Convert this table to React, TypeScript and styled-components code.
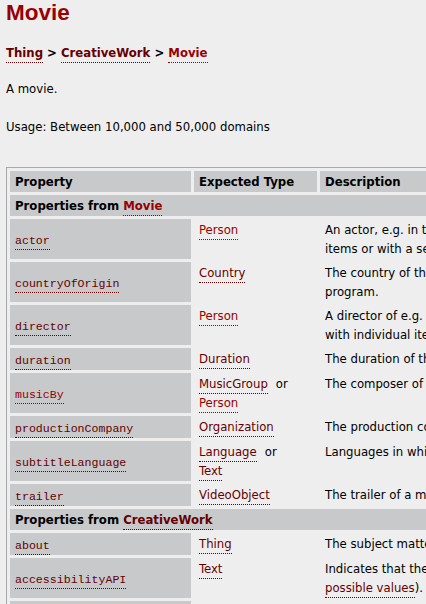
import React from "react";
import styled, { createGlobalStyle } from "styled-components";

const Global = createGlobalStyle`
  html, body { margin: 0; padding: 0; overflow: hidden; background: #eeeeee; }
  body {
    font-family: "DejaVu Sans Condensed", "DejaVu Sans", sans-serif;
    font-size: 13px;
    color: #000;
  }
`;

const Page = styled.div`
  padding: 0 6px;
  width: 1200px;
`;

const Title = styled.h1`
  margin: 0;
  font-family: "Liberation Sans", Arial, sans-serif;
  font-weight: bold;
  font-size: 22.5px;
  line-height: 26px;
  color: #990000;
`;

const Crumbs = styled.div`
  margin-top: 17px;
  font-weight: bold;
  line-height: 19px;
`;

const Para = styled.p<{ $top: number }>`
  margin: ${(p) => p.$top}px 0 0;
  line-height: 19px;
`;

const Link = styled.a<{ $fresh?: boolean }>`
  color: ${(p) => (p.$fresh ? "#990000" : "#660000")};
  text-decoration: none;
  border-bottom: 1px dotted ${(p) => (p.$fresh ? "#990000" : "#660000")};
  padding-bottom: 2px;
`;

const Code = styled.code`
  font-family: "Liberation Mono", "Courier New", monospace;
  font-size: 11.6px;
  line-height: 13px;
`;

const Table = styled.table`
  margin-top: 31px;
  border: 1px solid #a8a8a8;
  border-spacing: 3px;
  table-layout: fixed;
  width: 1100px;
`;

const HeadCell = styled.th`
  background: #c7c9cb;
  text-align: left;
  font-weight: bold;
  padding: 1px 5px;
  height: 19px;
  line-height: 19px;
  vertical-align: middle;
`;

const GroupCell = styled(HeadCell)``;

const PropCell = styled.th`
  background: #c7c9cb;
  text-align: left;
  font-weight: normal;
  padding: 1px 5px;
  height: 20px;
  line-height: 19px;
  vertical-align: middle;
`;

const Cell = styled.td`
  padding: 1px 5px;
  height: 20px;
  line-height: 19px;
  vertical-align: top;
  white-space: nowrap;
`;

const Or = styled.span`
  margin: 0 6px 0 8px;
`;

type T = { name: string; fresh?: boolean };
type Row = {
  prop: string;
  propFresh?: boolean;
  types: T[];
  desc: React.ReactNode[];
};

const movieRows: Row[] = [
  {
    prop: "actor",
    types: [{ name: "Person", fresh: true }],
    desc: [
      "An actor, e.g. in tv, radio, movie, video gaming etc., or in an event. Actors can be associated with individual",
      "items or with a series, episode, clip.",
    ],
  },
  {
    prop: "countryOfOrigin",
    types: [{ name: "Country" }],
    desc: [
      "The country of the principal offices of the production company or individual responsible for the movie or",
      "program.",
    ],
  },
  {
    prop: "director",
    types: [{ name: "Person", fresh: true }],
    desc: [
      "A director of e.g. tv, radio, movie, video gaming etc. content, or of an event. Directors can be associated",
      "with individual items or with a series, episode, clip.",
    ],
  },
  {
    prop: "duration",
    types: [{ name: "Duration" }],
    desc: ["The duration of the item (movie, audio recording, event, etc.) in ISO 8601 date format."],
  },
  {
    prop: "musicBy",
    propFresh: true,
    types: [{ name: "MusicGroup" }, { name: "Person", fresh: true }],
    desc: ["The composer of the soundtrack."],
  },
  {
    prop: "productionCompany",
    types: [{ name: "Organization" }],
    desc: ["The production company or studio responsible for the item e.g. series, video game, episode etc."],
  },
  {
    prop: "subtitleLanguage",
    types: [{ name: "Language" }, { name: "Text" }],
    desc: ["Languages in which subtitles/captions are available, in IETF BCP 47 standard format."],
  },
  {
    prop: "trailer",
    types: [{ name: "VideoObject" }],
    desc: ["The trailer of a movie or tv/radio series, season, episode, etc."],
  },
];

const workRows: Row[] = [
  {
    prop: "about",
    types: [{ name: "Thing" }],
    desc: ["The subject matter of the content."],
  },
  {
    prop: "accessibilityAPI",
    types: [{ name: "Text" }],
    desc: [
      "Indicates that the resource is compatible with the referenced accessibility API (WebSchemas wiki lists",
      <>
        <Link href="#">possible values</Link>).
      </>,
    ],
  },
  {
    prop: "accessibilityControl",
    types: [{ name: "Text" }],
    desc: [
      "Identifies input methods that are sufficient to fully control the described resource (WebSchemas wiki lists",
      <>
        <Link href="#">possible values</Link>).
      </>,
    ],
  },
];

function DataRow({ row }: { row: Row }) {
  return (
    <tr>
      <PropCell>
        <Code>
          <Link href="#" $fresh={row.propFresh}>
            {row.prop}
          </Link>
        </Code>
      </PropCell>
      <Cell>
        {row.types.map((t, i) => (
          <React.Fragment key={t.name + i}>
            {i > 0 && (
              <>
                <Or>or</Or>
                <br />
              </>
            )}
            <Link href="#" $fresh={t.fresh}>
              {t.name}
            </Link>
          </React.Fragment>
        ))}
      </Cell>
      <Cell>
        {row.desc.map((d, i) => (
          <React.Fragment key={i}>
            {i > 0 && <br />}
            {d}
          </React.Fragment>
        ))}
      </Cell>
    </tr>
  );
}

export default function App() {
  return (
    <>
      <Global />
      <Page>
        <Title>Movie</Title>
        <Crumbs>
          <Link href="#">Thing</Link> &gt; <Link href="#">CreativeWork</Link> &gt;{" "}
          <Link href="#" $fresh>
            Movie
          </Link>
        </Crumbs>
        <Para $top={17}>A movie.</Para>
        <Para $top={19}>Usage: Between 10,000 and 50,000 domains</Para>
        <Table>
          <colgroup>
            <col style={{ width: 181 }} />
            <col style={{ width: 123 }} />
            <col />
          </colgroup>
          <thead>
            <tr>
              <HeadCell>Property</HeadCell>
              <HeadCell>Expected Type</HeadCell>
              <HeadCell>Description</HeadCell>
            </tr>
          </thead>
          <tbody>
            <tr>
              <GroupCell colSpan={3}>
                Properties from{" "}
                <Link href="#" $fresh>
                  Movie
                </Link>
              </GroupCell>
            </tr>
            {movieRows.map((r) => (
              <DataRow key={r.prop} row={r} />
            ))}
            <tr>
              <GroupCell colSpan={3}>
                Properties from <Link href="#">CreativeWork</Link>
              </GroupCell>
            </tr>
            {workRows.map((r) => (
              <DataRow key={r.prop} row={r} />
            ))}
          </tbody>
        </Table>
      </Page>
    </>
  );
}
